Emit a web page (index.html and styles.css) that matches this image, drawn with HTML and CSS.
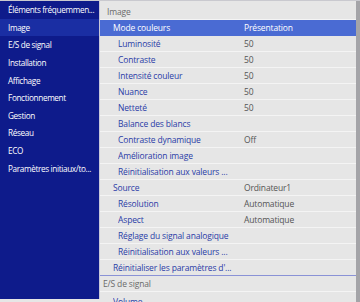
FILE: index.html
```html
<!DOCTYPE html>
<html lang="fr">
<head>
<meta charset="utf-8">
<link rel="stylesheet" href="styles.css">
</head>
<body>
<div class="app">
  <nav class="side">
    <div class="side-item">Éléments fréquemmen...</div>
    <div class="side-item active">Image</div>
    <div class="side-item">E/S de signal</div>
    <div class="side-item">Installation</div>
    <div class="side-item">Affichage</div>
    <div class="side-item">Fonctionnement</div>
    <div class="side-item">Gestion</div>
    <div class="side-item">Réseau</div>
    <div class="side-item">ECO</div>
    <div class="side-item">Paramètres initiaux/to...</div>
  </nav>
  <main class="main">
    <div class="row header"><span class="label">Image</span></div>
    <div class="row l1 selected"><span class="label">Mode couleurs</span><span class="value">Présentation</span></div>
    <div class="row l2"><span class="label">Luminosité</span><span class="value">50</span></div>
    <div class="row l2"><span class="label">Contraste</span><span class="value">50</span></div>
    <div class="row l2"><span class="label">Intensité couleur</span><span class="value">50</span></div>
    <div class="row l2"><span class="label">Nuance</span><span class="value">50</span></div>
    <div class="row l2"><span class="label">Netteté</span><span class="value">50</span></div>
    <div class="row l2"><span class="label">Balance des blancs</span></div>
    <div class="row l2"><span class="label">Contraste dynamique</span><span class="value">Off</span></div>
    <div class="row l2"><span class="label">Amélioration image</span></div>
    <div class="row l2"><span class="label">Réinitialisation aux valeurs ...</span></div>
    <div class="row l1"><span class="label">Source</span><span class="value">Ordinateur1</span></div>
    <div class="row l2"><span class="label">Résolution</span><span class="value">Automatique</span></div>
    <div class="row l2"><span class="label">Aspect</span><span class="value">Automatique</span></div>
    <div class="row l2"><span class="label">Réglage du signal analogique</span></div>
    <div class="row l2"><span class="label">Réinitialisation aux valeurs ...</span></div>
    <div class="row l1 last"><span class="label">Réinitialiser les paramètres d'...</span></div>
    <div class="row header section"><span class="label">E/S de signal</span></div>
    <div class="row l1 tail"><span class="label">Volume</span></div>
  </main>
  <div class="scrollbar"></div>
</div>
</body>
</html>
```
FILE: styles.css
```css
html, body {
  margin: 0;
  padding: 0;
  background: #e6e6e6;
}
body {
  width: 360px;
  height: 302px;
  overflow: hidden;
  font-family: "Open Sans", "DejaVu Sans", sans-serif;
  font-size: 8.5px;
  letter-spacing: -0.15px;
}
.app {
  display: flex;
  height: 302px;
  border-top: 1px solid #c9c9cf;
  box-sizing: border-box;
}
.side {
  flex: none;
  width: 99px;
  background: #0e1b8b;
  border-right: 1px solid #c8c8d8;
  height: 298px;
  display: flex;
  flex-direction: column;
}
.side-item {
  height: 17.65px;
  line-height: 17.65px;
  padding-left: 8px;
  color: #ffffff;
  font-size: 8.2px;
  letter-spacing: -0.35px;
  white-space: nowrap;
  overflow: hidden;
}
.side-item.active {
  background: #1a2ea3;
}
.main {
  flex: 1;
  min-width: 0;
  padding-top: 3px;
  display: flex;
  flex-direction: column;
  overflow: hidden;
}
.row {
  flex: none;
  height: 16px;
  display: flex;
  align-items: center;
  box-sizing: border-box;
  border-bottom: 1px solid #f4f4f4;
  color: #2a3ca6;
  white-space: nowrap;
}
.row .label {
  width: 0;
  flex: 1;
  overflow: hidden;
}
.row .value {
  width: 112px;
  color: #555555;
}
.header {
  color: #6a6a6a;
  padding-left: 7px;
}
.header.section {
  padding-left: 3px;
}
.l1 {
  padding-left: 13px;
}
.l2 {
  padding-left: 18px;
}
.selected {
  background: #4a6bd3;
  color: #ffffff;
  border-bottom-color: #4a6bd3;
}
.selected .value {
  color: #ffffff;
}
.last {
  border-bottom: 1px solid #8a92d6;
}
.tail {
  align-items: flex-end;
}
.scrollbar {
  flex: none;
  width: 4px;
  background: #a4a4a8;
}
```
